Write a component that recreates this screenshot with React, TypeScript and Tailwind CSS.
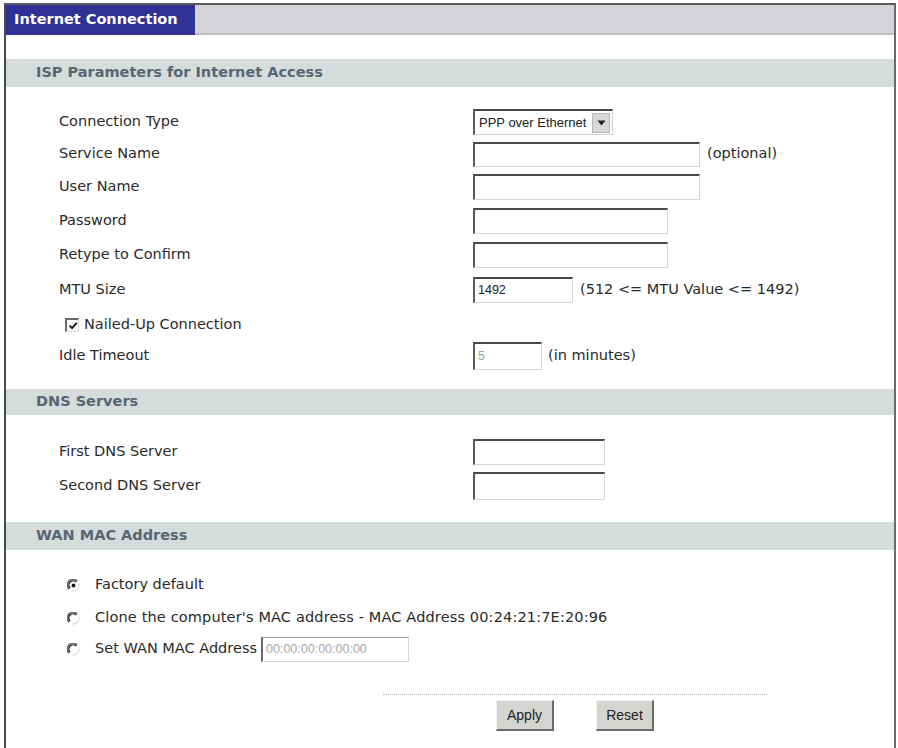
import React from "react";

function Radio({ checked }: { checked?: boolean }) {
  return (
    <svg width="13" height="13" viewBox="0 0 13 13" className="shrink-0">
      <circle cx="6.5" cy="6.5" r="5.6" fill="#fff" />
      <path d="M1.9 10.2 A5.6 5.6 0 0 1 10.2 1.9" stroke="#707070" strokeWidth="1.6" fill="none" />
      <path d="M3.1 9.2 A4.2 4.2 0 0 1 9.2 3.1" stroke="#202020" strokeWidth="1.4" fill="none" />
      <path d="M11.6 4.5 A5.6 5.6 0 0 1 4.5 11.6" stroke="#dcdcdc" strokeWidth="1.2" fill="none" />
      {checked && <circle cx="6.5" cy="6.5" r="2" fill="#111" />}
    </svg>
  );
}

function Checkbox() {
  return (
    <span className="inline-flex w-[14px] h-[14px] border-t-2 border-l-2 border-r border-b border-t-[#6a6a6a] border-l-[#6a6a6a] border-r-[#d8d8d8] border-b-[#d8d8d8] bg-white items-center justify-center shrink-0">
      <svg width="10" height="10" viewBox="0 0 10 10">
        <path d="M1.5 4.5 L4 7.2 L8.8 1.8" stroke="#111" strokeWidth="1.8" fill="none" />
      </svg>
    </span>
  );
}

function TextBox({ w, h, value, disabled }: { w: string; h: string; value?: string; disabled?: boolean }) {
  return (
    <div
      className={`${w} ${h} border-t-2 border-l-2 border-r border-b border-t-[#4a4a4a] border-l-[#5a5a5a] border-r-[#d6d6d6] border-b-[#d6d6d6] bg-white flex items-center pl-[3px] font-['Liberation_Sans',sans-serif] text-[12.5px] ${disabled ? "text-[#a0a0a0]" : "text-[#222]"}`}
    >
      {value}
    </div>
  );
}

function Band({ title, h }: { title: string; h: string }) {
  return (
    <div className={`${h} bg-[#d6dcdc] flex items-center pl-[30px] font-bold text-[14.5px] text-[#596573]`}>
      {title}
    </div>
  );
}

function Row({ label, h, children }: { label: React.ReactNode; h: string; children?: React.ReactNode }) {
  return (
    <div className={`${h} flex items-center`}>
      <div className="w-[467px] pl-[53px] shrink-0">{label}</div>
      <div className="flex items-center">{children}</div>
    </div>
  );
}

export default function App() {
  return (
    <div className="w-[898px] h-[748px] bg-white pt-[3px] pl-[4px] font-['DejaVu_Sans',sans-serif] text-[14.5px] text-[#2a2a2a] overflow-hidden">
      <div className="w-[892px] h-[745px] border-l-2 border-t-2 border-r-2 border-l-[#4a4a4a] border-t-[#5a5a5a] border-r-[#6a6a6a] flex flex-col">
        <div className="h-[30px] flex shrink-0">
          <div className="w-[189px] bg-[#2e3196] text-white font-bold text-[14.5px] pl-[8px] flex items-center">
            Internet Connection
          </div>
          <div className="flex-1 bg-[#d4d4d8] border-b-2 border-b-[#bdbdc2]" />
        </div>
        <div className="h-[24px] shrink-0" />
        <Band title="ISP Parameters for Internet Access" h="h-[28px] bg-[#d5dfdb]" />
        <div className="h-[19px]" />
        <Row label="Connection Type" h="h-[32px]">
          <div className="w-[140px] h-[26px] border-t-2 border-l-2 border-r border-b border-t-[#4a4a4a] border-l-[#5a5a5a] border-r-[#d0d0d0] border-b-[#d0d0d0] bg-white flex items-center font-['Liberation_Sans',sans-serif] text-[13px] text-[#222]">
            <span className="pl-[4px] flex-1">PPP over Ethernet</span>
            <span className="w-[18px] h-[20px] mr-[2px] bg-[#d8d8d8] border border-[#b8b8b8] flex items-center justify-center">
              <svg width="9" height="6" viewBox="0 0 9 6"><path d="M0.5 0.5 L8.5 0.5 L4.5 5.5 Z" fill="#222" /></svg>
            </span>
          </div>
        </Row>
        <Row label="Service Name" h="h-[32px]">
          <TextBox w="w-[227px]" h="h-[25px]" />
          <span className="ml-[7px]">(optional)</span>
        </Row>
        <Row label="User Name" h="h-[34px]">
          <TextBox w="w-[227px]" h="h-[26px]" />
        </Row>
        <Row label="Password" h="h-[34px]">
          <TextBox w="w-[195px]" h="h-[26px]" />
        </Row>
        <Row label="Retype to Confirm" h="h-[34px]">
          <TextBox w="w-[195px]" h="h-[26px]" />
        </Row>
        <Row label="MTU Size" h="h-[36px]">
          <TextBox w="w-[100px]" h="h-[26px]" value="1492" />
          <span className="ml-[7px]">(512 &lt;= MTU Value &lt;= 1492)</span>
        </Row>
        <div className="h-[34px] flex items-center pl-[59px]">
          <Checkbox />
          <span className="ml-[5px]">Nailed-Up Connection</span>
        </div>
        <Row label="Idle Timeout" h="h-[28px]">
          <TextBox w="w-[69px]" h="h-[28px]" value="5" disabled />
          <span className="ml-[6px]">(in minutes)</span>
        </Row>
        <div className="h-[19px]" />
        <Band title="DNS Servers" h="h-[26px]" />
        <div className="h-[20px]" />
        <Row label="First DNS Server" h="h-[34px]">
          <TextBox w="w-[132px]" h="h-[26px]" />
        </Row>
        <Row label="Second DNS Server" h="h-[34px]">
          <TextBox w="w-[132px]" h="h-[28px]" />
        </Row>
        <div className="h-[19px]" />
        <Band title="WAN MAC Address" h="h-[28px]" />
        <div className="h-[18px]" />
        <div className="h-[34px] flex items-center pl-[61px]">
          <Radio checked />
          <span className="ml-[15px]">Factory default</span>
        </div>
        <div className="h-[32px] flex items-center pl-[61px]">
          <Radio />
          <span className="ml-[15px] tracking-[0.15px]">Clone the computer's MAC address - MAC Address 00:24:21:7E:20:96</span>
        </div>
        <div className="h-[30px] flex items-center pl-[61px]">
          <Radio />
          <span className="ml-[15px]">Set WAN MAC Address</span>
          <div className="ml-[4px] w-[148px] h-[25px] border-t border-l-2 border-r border-b border-t-[#9a9a9a] border-l-[#6a6a6a] border-r-[#d8d8d8] border-b-[#d8d8d8] flex items-center pl-[3px] font-['Liberation_Sans',sans-serif] text-[12.5px] text-[#a8a8a8]">
            00:00:00:00:00:00
          </div>
        </div>
        <div className="h-[30px]" />
        <div className="ml-[377px] w-[384px] border-t border-dotted border-t-[#b8b8b8]" />
        <div className="ml-[377px] w-[384px] flex justify-center gap-[42px] mt-[5px] font-['Liberation_Sans',sans-serif] text-[14px] text-[#222]">
          <div className="w-[58px] h-[31px] bg-[#d4d4d0] border-t border-l border-r-2 border-b-2 border-t-[#f4f4f4] border-l-[#f4f4f4] border-r-[#6a6a6a] border-b-[#6a6a6a] flex items-center justify-center">
            Apply
          </div>
          <div className="w-[58px] h-[31px] bg-[#d4d4d0] border-t border-l border-r-2 border-b-2 border-t-[#f4f4f4] border-l-[#f4f4f4] border-r-[#6a6a6a] border-b-[#6a6a6a] flex items-center justify-center">
            Reset
          </div>
        </div>
      </div>
    </div>
  );
}
